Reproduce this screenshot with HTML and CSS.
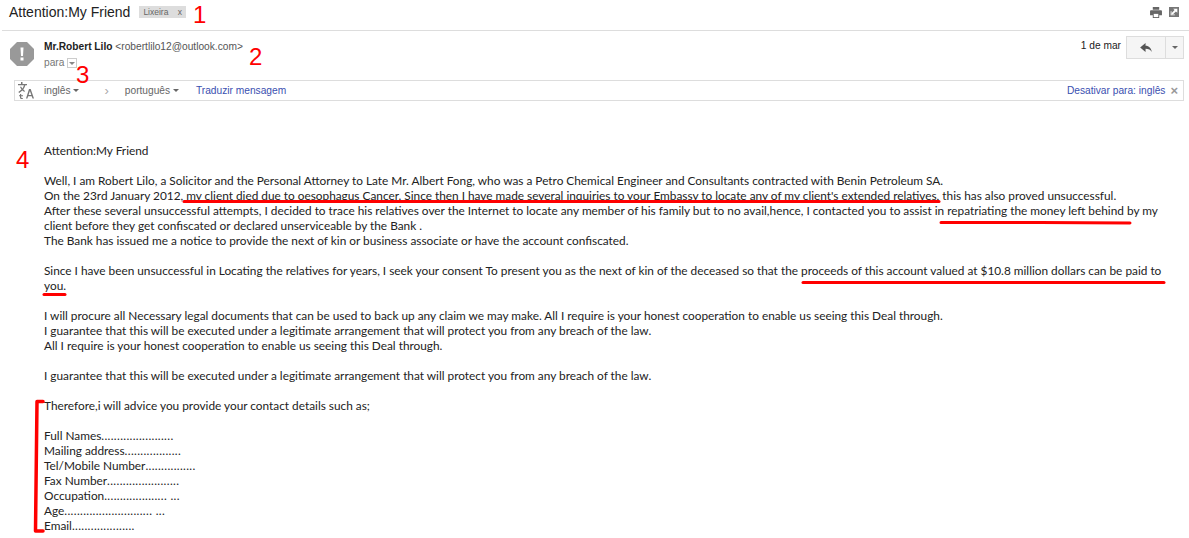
FILE: index.html
```html
<!DOCTYPE html>
<html lang="pt">
<head>
    <meta charset="UTF-8">
    <title>Attention:My Friend</title>
    <link rel="stylesheet" href="styles.css">
</head>
<body>
<div class="subject-row">
    <h1>Attention:My Friend</h1>
    <span class="label">Lixeira <i>x</i></span>
    <div class="subject-icons">
        <svg width="12" height="11" viewBox="0 0 13 12"><path fill="#666" d="M3 0h7v3H3zM1 3.500h11a1 1 0 0 1 1 1V9h-3v3H3V9H0V4.500a1 1 0 0 1 1-1z"/><path fill="#fff" d="M4 7.500h5V11H4z"/></svg>
        <svg width="10" height="10" viewBox="0 0 12 12"><path fill="#777" d="M0 0h12v12H0z"/><path fill="#fff" d="M5 2h5v5L8.300 5.300 4.500 9 3 7.500l3.700-3.800zM2 5h1v4h4v1H2z"/></svg>
    </div>
</div>

<div class="sender-row">
    <svg class="avatar" width="24" height="24" viewBox="0 0 24 24"><path fill="#999" d="M7 0h10l7 7v10l-7 7H7l-7-7V7z"/><path fill="#fff" d="M10.500 5.500h3l-.5 8.500h-2zM10.500 15.500h3v3h-3z"/></svg>
    <div class="sender-info">
        <div><b>Mr.Robert Lilo</b> <span class="addr">&lt;robertlilo12@outlook.com&gt;</span></div>
        <div class="to">para <span class="to-arrow"><span class="caret"></span></span></div>
    </div>
    <div class="sender-right">
        <span class="date">1 de mar</span>
        <div class="reply-btn">
            <span class="reply-main">
                <svg width="12" height="9" viewBox="0 0 13 10"><path fill="#555" d="M6 0v3c4 0 6 2.500 7 7-1.500-2.500-3.500-3.500-7-3.500V10L0 5z"/></svg>
            </span>
            <span class="reply-more"><span class="caret"></span></span>
        </div>
    </div>
</div>

<div class="translate-bar">
    <svg class="translate-icon" width="17" height="17" viewBox="0 0 17 17"><path fill="#777" d="M4 0h1.500v2H10v1.300H8.400C7.900 5 7.200 6.300 6.300 7.400l1.600 1.500-.6 1.200-1.900-1.700L2.200 11l-.9-1 3.200-2.500C3.800 6.600 3.300 5.700 2.900 4.800h1.400c.3.600.7 1.200 1.100 1.700.6-.9 1.200-2 1.500-3.200H1V2h3z"/><path fill="#777" d="M12 7h1.700l3.300 9.500h-1.500l-.8-2.300h-3.500l-.8 2.300H9zm-.4 6h2.700l-1.400-4z"/><path fill="#777" d="M3 12h1.200v1.200H6v1H4.200v1.400c0 .4.300.5 1.600.3v1c-2 .300-2.800 0-2.800-1.100v-1.600H2v-1h1z"/></svg>
    <span class="lang">inglês <span class="caret"></span></span>
    <span class="chev">›</span>
    <span class="lang">português <span class="caret"></span></span>
    <a class="link">Traduzir mensagem</a>
    <a class="link off">Desativar para: inglês</a>
    <span class="bar-close">×</span>
</div>

<div class="message">
    <p>Attention:My Friend</p>
    <p>Well, I am Robert Lilo, a Solicitor and the Personal Attorney to Late Mr. Albert Fong, who was a Petro Chemical Engineer and Consultants contracted with Benin Petroleum SA.<br>
    On the 23rd January 2012, my client died due to oesophagus Cancer. Since then I have made several inquiries to your Embassy to locate any of my client's extended relatives, this has also proved unsuccessful.<br>
    After these several unsuccessful attempts, I decided to trace his relatives over the Internet to locate any member of his family but to no avail,hence, I contacted you to assist in repatriating the money left behind by my<br>
    client before they get confiscated or declared unserviceable by the Bank .<br>
    The Bank has issued me a notice to provide the next of kin or business associate or have the account confiscated.</p>
    <p>Since I have been unsuccessful in Locating the relatives for years, I seek your consent To present you as the next of kin of the deceased so that the proceeds of this account valued at $10.8 million dollars can be paid to<br>
    you.</p>
    <p>I will procure all Necessary legal documents that can be used to back up any claim we may make. All I require is your honest cooperation to enable us seeing this Deal through.<br>
    I guarantee that this will be executed under a legitimate arrangement that will protect you from any breach of the law.<br>
    All I require is your honest cooperation to enable us seeing this Deal through.</p>
    <p>I guarantee that this will be executed under a legitimate arrangement that will protect you from any breach of the law.</p>
    <p>Therefore,i will advice you provide your contact details such as;</p>
    <p>Full Names<span class="dots">.......................</span><br>
    Mailing address<span class="dots">..................</span><br>
    Tel/Mobile Number<span class="dots">................</span><br>
    Fax Number<span class="dots">.......................</span><br>
    Occupation<span class="dots">.................... ...</span><br>
    Age<span class="dots">............................ ...</span><br>
    Email<span class="dots">....................</span></p>
</div>

<!-- red marks drawn over the screenshot -->
<span class="mark mark-1">1</span>
<span class="mark mark-2">2</span>
<span class="mark mark-3">3</span>
<span class="mark mark-4">4</span>
<svg class="scribble" width="1189" height="538" viewBox="0 0 1189 538">
    <g fill="none" stroke="#f00" stroke-width="3" stroke-linecap="round" stroke-linejoin="round">
        <path d="M184 201.500H939"/>
        <path d="M941 222.500L1040 222.500 1130 223"/>
        <path d="M803 282.500H1164"/>
        <path d="M44 294.500H65"/>
        <path stroke-width="3.500" d="M43 401.500H37L35.500 531H43"/>
    </g>
</svg>
</body>
</html>
```
FILE: styles.css
```css
body {
    margin: 0;
    height: 538px;
    overflow: hidden;
    position: relative;
    font-family: "Liberation Sans", Arial, sans-serif;
    font-size: 10.200px;
    color: #222;
    background: #fff;
}

.caret {
    display: inline-block;
    width: 0;
    height: 0;
    border-left: 3px solid transparent;
    border-right: 3px solid transparent;
    border-top: 3px solid #666;
    vertical-align: 2px;
}

/* subject */
.subject-row {
    display: flex;
    align-items: center;
    height: 24px;
    margin-left: 2px;
    padding: 0 10px 6px 7px;
    border-bottom: 1px solid #ddd;
}
h1 {
    margin: 0 9px 0 0;
    font-size: 14px;
    font-weight: normal;
    color: #222;
}
.label {
    display: inline-block;
    background: #ddd;
    color: #666;
    font-size: 8.500px;
    line-height: 12px;
    padding: 0 4px;
}
.label i {
    font-style: normal;
    margin-left: 7px;
}
.subject-icons {
    margin-left: auto;
    display: flex;
    align-items: center;
    gap: 7px;
}

/* sender */
.sender-row {
    display: flex;
    height: 49px;
    padding: 5px 5px 0 10px;
    box-sizing: border-box;
}
.avatar {
    margin-top: 6px;
}
.sender-info {
    margin-left: 10px;
    padding-top: 4px;
    line-height: 14px;
}
.addr {
    color: #555;
}
.to {
    margin-top: 2px;
    color: #777;
    display: flex;
    align-items: center;
    gap: 3px;
}
.to-arrow {
    display: inline-flex;
    justify-content: center;
    align-items: center;
    width: 8px;
    height: 8px;
    border: 1px solid #ccc;
}
.to-arrow .caret {
    border-top-color: #888;
    vertical-align: 0;
}
.sender-right {
    margin-left: auto;
    display: flex;
    gap: 5px;
    align-items: flex-start;
}
.date {
    margin-top: 4px;
}
.reply-btn {
    display: flex;
    height: 23px;
    border: 1px solid #ddd;
    background: #f5f5f5;
    box-sizing: border-box;
}
.reply-main {
    width: 38px;
    border-right: 1px solid #ddd;
    display: flex;
    align-items: center;
    justify-content: center;
}
.reply-more {
    width: 17px;
    display: flex;
    align-items: center;
    justify-content: center;
}

/* translate bar */
.translate-bar {
    display: flex;
    align-items: center;
    height: 21px;
    margin: 0 5px 0 14px;
    border: 1px solid #ddd;
    box-sizing: border-box;
    color: #666;
}
.translate-icon {
    margin-left: 2px;
    margin-right: 10px;
}
.chev {
    margin: 0 16px 0 25px;
    color: #aaa;
    font-size: 13px;
}
.link {
    color: #3a4fb0;
    margin-left: 17px;
}
.off {
    margin-left: auto;
}
.bar-close {
    margin: 0 5px;
    color: #999;
    font-size: 13px;
    font-weight: bold;
}

/* message text */
.message {
    padding: 42px 0 0 44px;
    font-family: Lato, "Open Sans", sans-serif;
    font-size: 11.830px;
    line-height: 15px;
    color: #222;
    white-space: nowrap;
}
.message p {
    margin: 0 0 15px;
}
.dots {
    letter-spacing: .35px;
}

/* red annotations */
.mark {
    position: absolute;
    color: #f00;
    font-size: 24px;
    line-height: 24px;
}
.mark-1 { left: 193px; top: 3px; }
.mark-2 { left: 249px; top: 45px; }
.mark-3 { left: 76px; top: 63px; }
.mark-4 { left: 16px; top: 148px; }
.scribble {
    position: absolute;
    left: 0;
    top: 0;
    pointer-events: none;
}
```
